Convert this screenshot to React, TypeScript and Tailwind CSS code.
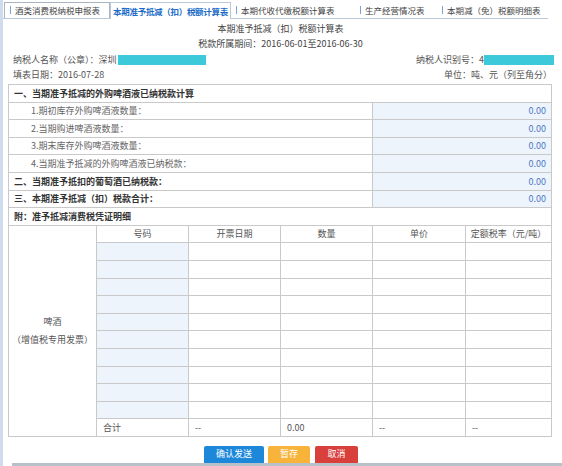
import React from 'react';

const font = { fontFamily: '"Noto Sans CJK SC", "Liberation Sans", sans-serif' };

const tabs = [
  { label: '酒类消费税纳税申报表', w: 'w-[106px]', boxed: true },
  { label: '本期准予抵减（扣）税额计算表', w: 'w-[121px]', active: true },
  { label: '本期代收代缴税额计算表', w: 'w-[124px]' },
  { label: '生产经营情况表', w: 'w-[82px]' },
  { label: '本期减（免）税额明细表', w: 'w-[111px]' },
];

const upperRows = [
  { label: '1.期初库存外购啤酒液数量：', sub: true },
  { label: '2.当期购进啤酒液数量：', sub: true },
  { label: '3.期末库存外购啤酒液数量：', sub: true },
  { label: '4.当期准予抵减的外购啤酒液已纳税款：', sub: true },
  { label: '二、当期准予抵扣的葡萄酒已纳税款：', sub: false },
  { label: '三、本期准予抵减（扣）税款合计：', sub: false },
];

const cell = 'border border-[#c9c9c9] h-[17.6px] p-0';

export default function App() {
  return (
    <div className="relative flex h-[466px] w-[562px] overflow-hidden bg-white text-[9px] text-[#555]" style={font}>
      <div className="w-[3px] shrink-0 bg-[#cfdcee]" />
      <div className="flex flex-1 flex-col">
        {/* tabs */}
        <div className="mt-[2px] flex h-[18px] w-[545px] items-stretch border-b border-[#b9c8da] pl-[1px]">
          {tabs.map((t) =>
            t.active ? (
              <div
                key={t.label}
                className={`${t.w} -mb-px flex items-center justify-center whitespace-nowrap border-x border-t border-[#b9c8da] bg-white text-[8.5px] font-bold tracking-[-0.3px] text-[#1c6cc8]`}
              >
                {t.label}
              </div>
            ) : (
              <div
                key={t.label}
                className={`${t.w} flex items-center gap-[4px] whitespace-nowrap pl-[5px] ${t.boxed ? 'border border-b-0 border-[#aab4c0]' : ''} text-[8.5px] text-[#444]`}
              >
                <span className="h-[8px] w-px bg-[#7aa2d6]" />
                <span>{t.label}</span>
              </div>
            ),
          )}
        </div>

        {/* heading */}
        <div className="mt-[2px] flex h-[16px] items-center justify-center pr-[4px] text-[#444]">
          本期准予抵减（扣）税额计算表
        </div>
        <div className="flex h-[17px] items-center justify-center pr-[4px] text-[#444]">
          税款所属期间：2016-06-01至2016-06-30
        </div>
        <div className="flex h-[16px] items-center justify-between pl-[10px] pr-[8px]">
          <div className="flex items-center">
            纳税人名称（公章）：深圳
            <span className="ml-px h-[10px] w-[88px] bg-[#3ccadb]" />
          </div>
          <div className="flex items-center">
            纳税人识别号：4
            <span className="h-[10px] w-[70px] bg-[#3ccadb]" />
          </div>
        </div>
        <div className="flex h-[16px] items-center justify-between pl-[10px] pr-[10px]">
          <span>填表日期：2016-07-28</span>
          <span>单位：吨、元（列至角分）</span>
        </div>

        {/* table */}
        <table className="ml-[5px] mt-[2px] w-[543px] table-fixed border-collapse">
          <colgroup>
            <col className="w-[88px]" />
            <col className="w-[92px]" />
            <col className="w-[92px]" />
            <col className="w-[92px]" />
            <col className="w-[93px]" />
            <col className="w-[86px]" />
          </colgroup>
          <tbody>
            <tr>
              <td colSpan={6} className={`${cell} pl-[5px] font-bold text-[#333]`}>
                一、当期准予抵减的外购啤酒液已纳税款计算
              </td>
            </tr>
            {upperRows.map((r) => (
              <tr key={r.label}>
                <td
                  colSpan={4}
                  className={`${cell} ${r.sub ? 'pl-[22px] text-[#666]' : 'pl-[5px] font-bold text-[#333]'}`}
                >
                  {r.label}
                </td>
                <td colSpan={2} className={`${cell} bg-[#eef4fc] pr-[5px] text-right text-[#4a78c2]`}>
                  0.00
                </td>
              </tr>
            ))}
            <tr>
              <td colSpan={6} className={`${cell} pl-[5px] font-bold text-[#333]`}>
                附：准予抵减消费税凭证明细
              </td>
            </tr>
            <tr>
              <td rowSpan={12} className={`${cell} text-center leading-[18px] text-[#555]`}>
                <div>啤酒</div>
                <div>（增值税专用发票）</div>
              </td>
              {['号码', '开票日期', '数量', '单价', '定额税率（元/吨）'].map((h) => (
                <td key={h} className={`${cell} text-center text-[#555]`}>
                  {h}
                </td>
              ))}
            </tr>
            {Array.from({ length: 10 }).map((_, i) => (
              <tr key={i}>
                <td className={`${cell} bg-[#eef4fc]`} />
                <td className={cell} />
                <td className={cell} />
                <td className={cell} />
                <td className={cell} />
              </tr>
            ))}
            <tr>
              <td className={`${cell} pl-[6px]`}>合计</td>
              <td className={`${cell} pl-[6px]`}>--</td>
              <td className={`${cell} pl-[6px]`}>0.00</td>
              <td className={`${cell} pl-[6px]`}>--</td>
              <td className={`${cell} pl-[6px]`}>--</td>
            </tr>
          </tbody>
        </table>

        {/* buttons */}
        <div className="mt-[9px] flex justify-center gap-[4px] pr-[3px] text-white">
          <button type="button" className="h-[20px] w-[60px] rounded-[2px] bg-[#1d88da] pb-[4px]">
            确认发送
          </button>
          <button type="button" className="h-[20px] w-[42px] rounded-[2px] bg-[#f8b33a] pb-[4px]">
            暂存
          </button>
          <button type="button" className="ml-px h-[20px] w-[43px] rounded-[2px] bg-[#d8403b] pb-[4px]">
            取消
          </button>
        </div>
      </div>
      <div className="absolute bottom-0 left-[12px] right-0 h-[3px] bg-[#b8c0c8]" />
    </div>
  );
}
